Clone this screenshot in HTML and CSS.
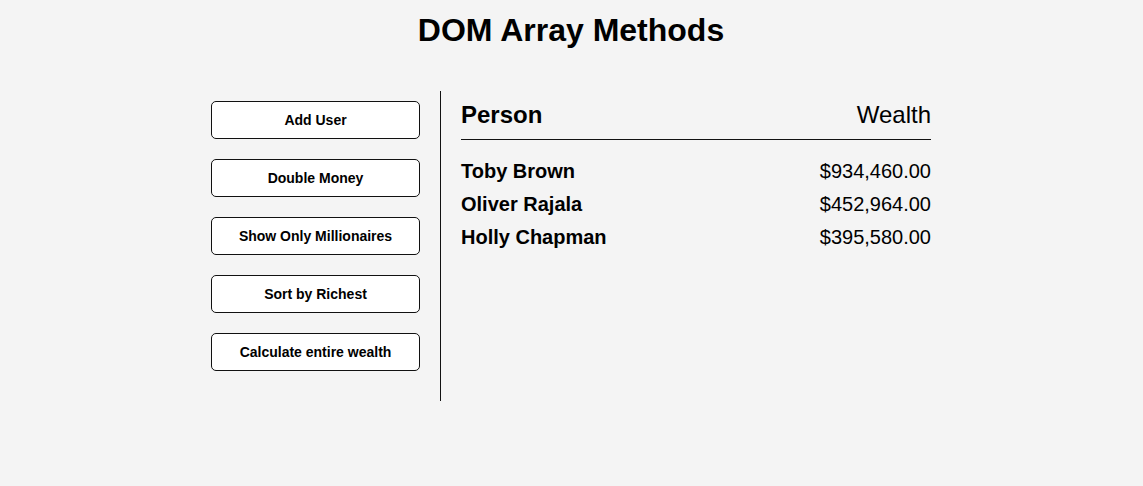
FILE: index.html
```html
<!DOCTYPE html>
<html lang="en">
<head>
<meta charset="UTF-8">
<title>DOM Array Methods</title>
<link rel="stylesheet" href="styles.css">
</head>
<body>
  <h1 class="title">DOM Array Methods</h1>
  <div class="container">
    <aside class="sidebar">
      <button class="btn">Add User</button>
      <button class="btn">Double Money</button>
      <button class="btn">Show Only Millionaires</button>
      <button class="btn">Sort by Richest</button>
      <button class="btn">Calculate entire wealth</button>
    </aside>
    <main class="main">
      <h2 class="head"><strong class="name">Person</strong> Wealth</h2>
      <div class="person"><strong class="name">Toby Brown</strong> $934,460.00</div>
      <div class="person"><strong class="name">Oliver Rajala</strong> $452,964.00</div>
      <div class="person"><strong class="name">Holly Chapman</strong> $395,580.00</div>
    </main>
  </div>
</body>
</html>
```
FILE: styles.css
```css
* {
  box-sizing: border-box;
}

body {
  margin: 0;
  padding-right: 1px;
  background: #f4f4f4;
  font-family: "Liberation Sans", Arial, sans-serif;
  color: #000;
  display: flex;
  flex-direction: column;
  align-items: center;
}

.title {
  font-size: 32px;
  font-weight: bold;
  margin: 12px 0 22px;
}

.container {
  display: flex;
  padding: 20px;
  width: 800px;
  max-width: 100%;
}

.sidebar {
  width: 250px;
  padding: 10px 20px;
  border-right: 1px solid #111;
}

.btn {
  display: block;
  width: 100%;
  background: #fff;
  border: 1px solid #111;
  border-radius: 5px;
  padding: 10px;
  margin-bottom: 20px;
  font-family: "Liberation Sans", Arial, sans-serif;
  font-weight: bold;
  font-size: 14px;
  line-height: 16px;
  color: #000;
  cursor: pointer;
}

.main {
  flex: 1;
  padding: 10px 20px;
}

.head {
  display: flex;
  justify-content: space-between;
  font-size: 24px;
  font-weight: 400;
  margin: 0 0 20px;
  padding-bottom: 10px;
  border-bottom: 1px solid #111;
}

.name {
  font-weight: 700;
}

.person {
  display: flex;
  justify-content: space-between;
  font-size: 20px;
  margin-bottom: 10px;
}
```
